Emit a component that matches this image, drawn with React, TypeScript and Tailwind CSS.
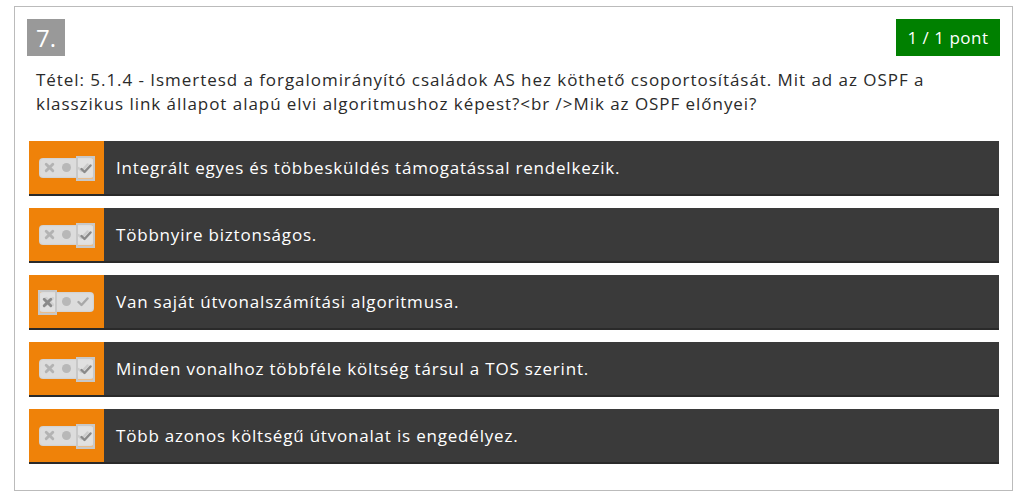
const answers = [
  { text: "Integrált egyes és többesküldés támogatással rendelkezik.", state: "yes" },
  { text: "Többnyire biztonságos.", state: "yes" },
  { text: "Van saját útvonalszámítási algoritmusa.", state: "no" },
  { text: "Minden vonalhoz többféle költség társul a TOS szerint.", state: "yes" },
  { text: "Több azonos költségű útvonalat is engedélyez.", state: "yes" },
];

function Toggle({ state }: { state: string }) {
  return (
    <div className="relative w-[55px] h-[20px] rounded-[4px] bg-[#dcdcdc] shadow-[inset_0_0_2px_rgba(0,0,0,0.15)]">
      <div className="absolute inset-0 flex items-center justify-between px-[5px]">
        <svg width="11" height="11" viewBox="0 0 10 10">
          <path d="M2 2 L8 8 M8 2 L2 8" stroke="#b3b3b3" strokeWidth="2.6" strokeLinecap="round" />
        </svg>
        <span className="w-[9px] h-[9px] rounded-full bg-[#b8b8b8]" />
        <svg width="12" height="11" viewBox="0 0 12 10">
          <path d="M1.5 5.5 L4.5 8.5 L10.5 2" stroke="#a8a8a8" strokeWidth="2.4" fill="none" strokeLinecap="round" strokeLinejoin="round" />
        </svg>
      </div>
      {state === "yes" ? (
        <div className="absolute right-[-1px] top-[-2px] w-[19px] h-[25px] border-2 border-[#c8c8c8] bg-[#e4e4e4]/60 flex items-center justify-center">
          <svg width="12" height="11" viewBox="0 0 12 10">
            <path d="M1.5 5.5 L4.5 8.5 L10.5 2" stroke="#8a8a8a" strokeWidth="2.4" fill="none" strokeLinecap="round" strokeLinejoin="round" />
          </svg>
        </div>
      ) : (
        <div className="absolute left-[-1px] top-[-2px] w-[19px] h-[25px] border-2 border-[#c8c8c8] bg-[#e4e4e4]/60 flex items-center justify-center">
          <svg width="11" height="11" viewBox="0 0 10 10">
            <path d="M2 2 L8 8 M8 2 L2 8" stroke="#8a8a8a" strokeWidth="2.6" strokeLinecap="round" />
          </svg>
        </div>
      )}
    </div>
  );
}

export default function App() {
  return (
    <div className="w-[1021px] h-[498px] bg-white pt-[6px] pl-[14px] font-['Open_Sans',sans-serif]">
      <div className="w-[999px] h-[485px] border border-[#bbbbbb] px-[12px] pt-[12px]">
        <div className="flex justify-between items-start">
          <span className="flex items-center justify-center w-[38px] h-[37px] bg-[#999999] text-white text-[24px] leading-none">
            7.
          </span>
          <span className="flex items-center justify-center w-[104px] h-[37px] bg-[#008000] text-white text-[17px] tracking-[0.5px]">
            1 / 1 pont
          </span>
        </div>
        <p className="mt-[12px] pl-[9px] pr-[30px] text-[17px] leading-[24px] tracking-[0.95px] text-[#2a2a2a]">
          Tétel: 5.1.4 - Ismertesd a forgalomirányító családok AS hez köthető csoportosítását. Mit ad az OSPF a klasszikus link állapot alapú elvi algoritmushoz képest?&lt;br /&gt;Mik az OSPF előnyei?
        </p>
        <div className="mt-[25px] ml-[2px] mr-[1px] flex flex-col gap-[12px]">
          {answers.map((a) => (
            <div key={a.text} className="flex h-[55px] bg-[#3a3a3a] border-b-2 border-[#2a2a2a]">
              <div className="w-[75px] bg-[#ef8209] flex items-center justify-center">
                <Toggle state={a.state} />
              </div>
              <div className="flex items-center pl-[12px] text-white text-[17px] tracking-[0.8px]">{a.text}</div>
            </div>
          ))}
        </div>
      </div>
    </div>
  );
}
